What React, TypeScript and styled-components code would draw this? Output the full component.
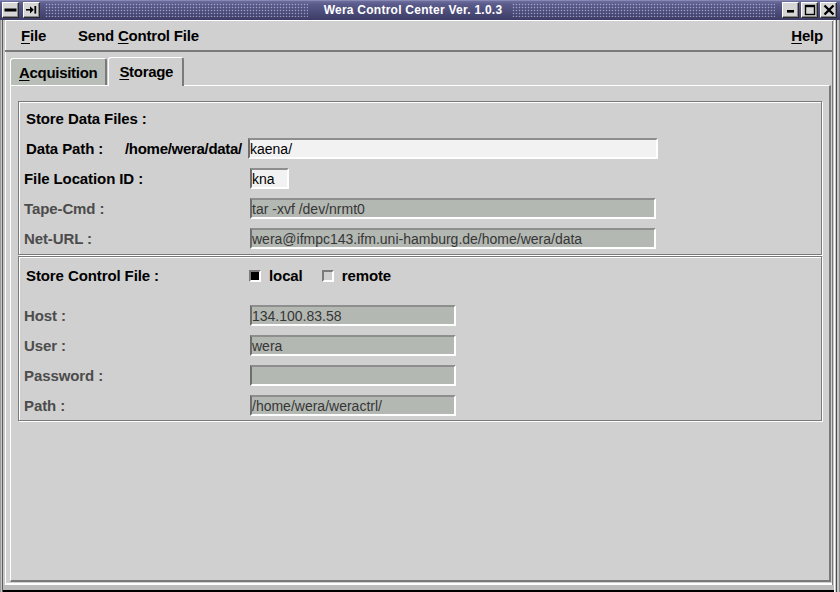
import React from "react";
import styled, { createGlobalStyle, css } from "styled-components";

const GlobalStyle = createGlobalStyle`
  html, body { margin: 0; padding: 0; background: #000; }
  body { font-family: "Liberation Sans", Arial, Helvetica, sans-serif; }
  * { box-sizing: border-box; }
`;

const FACE = "#d0d0d0";
const SHADOW = "#7a7a7a";
const UI_FONT = `bold 15px "Liberation Sans", Arial, sans-serif`;

const Window = styled.div`
  width: 840px;
  height: 592px;
  display: flex;
  flex-direction: column;
  overflow: hidden;
  background: #c6c6c6;
`;

/* ---------- title bar ---------- */
const TitleBar = styled.div`
  height: 20px;
  flex: none;
  display: flex;
  align-items: center;
  background: linear-gradient(
    to bottom,
    #a2a2ca 0px,
    #6e6e9e 1px,
    #5c5c8c 4px,
    #4c4c7a 12px,
    #3c3c66 20px
  );
`;

const ButtonGroup = styled.div<{ $side: "left" | "right" }>`
  display: flex;
  align-items: center;
  gap: ${(p) => (p.$side === "left" ? "4px" : "2px")};
  padding: ${(p) => (p.$side === "left" ? "0 0 0 2px" : "0 3px 0 0")};
`;

const WinButton = styled.div`
  width: 17px;
  height: 16px;
  background: #d6d6d6;
  border: 1px solid;
  border-color: #ffffff #2a2a2a #2a2a2a #ffffff;
  box-shadow: inset -1px -1px 0 #8a8a8a;
  display: flex;
  align-items: center;
  justify-content: center;
`;

const Dots = styled.div<{ $side: "left" | "right" }>`
  flex: 1;
  align-self: stretch;
  margin: ${(p) => (p.$side === "left" ? "3px 10px 3px 5px" : "3px 7px 3px 10px")};
  background-image: radial-gradient(circle, rgba(205, 205, 235, 0.65) 0 0.75px, transparent 1.05px);
  background-size: 3px 3px;
`;

const TitleText = styled.div`
  padding-left: 6px;
  color: #ffffff;
  font: bold 12px "Liberation Sans", Arial, sans-serif;
  letter-spacing: 0.25px;
  white-space: nowrap;
`;

/* ---------- window frame & content ---------- */
const Frame = styled.div`
  flex: 1;
  display: flex;
  padding: 0 7px 7px 5px;
  background: #c6c6c6;
  box-shadow:
    inset 1px 0 0 #9c9c9c,
    inset 2px 0 0 #c6c6c6,
    inset 3px 0 0 #5c5c5c,
    inset -1px 0 0 #8c8c8c,
    inset -3px 0 0 #c6c6c6,
    inset -4px 0 0 #4a4a4a,
    inset -5px 0 0 #c6c6c6,
    inset -6px 0 0 #ffffff,
    inset 0 -2px 0 #000000,
    inset 0 -7px 0 #bcbcbc;
`;

const Content = styled.div`
  flex: 1;
  display: flex;
  flex-direction: column;
  background: ${FACE};
  box-shadow: inset 1px 0 0 #ffffff, inset -1px 0 0 ${SHADOW}, inset 0 -2px 0 #ffffff;
`;

/* ---------- menu bar ---------- */
const MenuBar = styled.div`
  height: 32px;
  flex: none;
  display: flex;
  align-items: center;
  padding: 0 5px 0 11px;
  border-top: 1px solid #ffffff;
  border-bottom: 2px solid ${SHADOW};
  box-shadow: inset 1px 0 0 #ffffff, inset -1px 0 0 ${SHADOW};
`;

const MenuItem = styled.div<{ $right?: boolean }>`
  padding: 0 5px;
  font: ${UI_FONT};
  letter-spacing: -0.2px;
  color: #000;
  & + & {
    margin-left: 22px;
  }
  ${(p) =>
    p.$right &&
    css`
      margin-left: auto !important;
    `}
`;

const Key = styled.span`
  text-decoration: underline;
  text-underline-offset: 2px;
`;

/* ---------- tabs ---------- */
const TabArea = styled.div`
  flex: 1;
  display: flex;
  flex-direction: column;
  padding: 5px 2px 3px 5px;
`;

const TabRow = styled.div`
  height: 28px;
  flex: none;
  display: flex;
  align-items: flex-end;
  position: relative;
  z-index: 1;
`;

const Tab = styled.div<{ $active?: boolean }>`
  height: ${(p) => (p.$active ? "29px" : "27px")};
  margin-bottom: ${(p) => (p.$active ? "-1px" : "0")};
  display: flex;
  align-items: center;
  padding: ${(p) => (p.$active ? "0 9px 1px 10px" : "0 8px 0 8px")};
  background: ${(p) => (p.$active ? FACE : "#b9beb8")};
  border-top: 1px solid #ffffff;
  border-left: 1px solid #ffffff;
  border-right: 2px solid ${SHADOW};
  border-radius: 3px 3px 0 0;
  font: ${UI_FONT};
  letter-spacing: -0.3px;
  color: #000;
  & + & {
    margin-left: 1px;
  }
`;

const Panel = styled.div`
  flex: 1;
  display: flex;
  flex-direction: column;
  gap: 1px;
  padding: 15px 7px 0 7px;
  background: ${FACE};
  border-top: 1px solid #ffffff;
  border-left: 1px solid #ffffff;
  border-right: 2px solid ${SHADOW};
  border-bottom: 2px solid ${SHADOW};
`;

/* ---------- groups & rows ---------- */
const Group = styled.div<{ $pt: number; $pb: number }>`
  display: flex;
  flex-direction: column;
  gap: 9px;
  padding: ${(p) => `${p.$pt}px 0 ${p.$pb}px 5px`};
  border: 1px solid ${SHADOW};
  box-shadow: inset 1px 1px 0 #ffffff, 1px 1px 0 #ffffff;
`;

const Row = styled.div<{ $mt?: number }>`
  height: 21px;
  display: grid;
  grid-template-columns: 226px 1fr;
  align-items: center;
  margin-top: ${(p) => p.$mt ?? 0}px;
`;

const PathRow = styled(Row)`
  grid-template-columns: 101px 123px 1fr;
`;

const Label = styled.div<{ $muted?: boolean; $indent?: boolean }>`
  font: ${UI_FONT};
  letter-spacing: -0.1px;
  color: ${(p) => (p.$muted ? "#4c4c4c" : "#000")};
  padding-left: ${(p) => (p.$indent ? "2px" : "0")};
  white-space: nowrap;
`;

const Prefix = styled.div`
  font: ${UI_FONT};
  letter-spacing: -0.3px;
  color: #000;
  white-space: nowrap;
`;

const Field = styled.div<{ $w: number; $disabled?: boolean }>`
  width: ${(p) => p.$w}px;
  height: 21px;
  display: flex;
  align-items: center;
  padding: 0 1px 0 0;
  background: ${(p) => (p.$disabled ? "#b4b8b3" : "#f2f2f2")};
  border: 2px solid;
  border-color: #8e8e8e #ffffff #ffffff #6e6e6e;
  font: 14px "Liberation Sans", Arial, sans-serif;
  color: ${(p) => (p.$disabled ? "#363636" : "#000")};
  white-space: nowrap;
  overflow: hidden;
`;

const Toggles = styled.div`
  display: flex;
  align-items: center;
  margin-left: -1px;
`;

const Toggle = styled.div`
  display: flex;
  align-items: center;
  gap: 8px;
  font: ${UI_FONT};
  letter-spacing: -0.1px;
  color: #000;
  & + & {
    margin-left: 19px;
  }
`;

const ToggleBox = styled.span<{ $on?: boolean }>`
  width: 12px;
  height: 12px;
  border: 2px solid;
  border-color: #7a7a7a #ffffff #ffffff #7a7a7a;
  background: ${(p) => (p.$on ? "#000" : "#cfcfcf")};
`;

/* ---------- title bar glyphs ---------- */
const IconBar = () => (
  <svg width="13" height="12" viewBox="0 0 13 12">
    <rect x="0.5" y="4.5" width="12" height="3" fill="#000" />
  </svg>
);

const IconPin = () => (
  <svg width="11" height="10" viewBox="0 0 11 10">
    <rect x="0" y="4" width="5" height="1.6" fill="#000" />
    <polygon points="4,1.2 7.8,4.8 4,8.4" fill="#000" />
    <rect x="8.4" y="1" width="1.8" height="7.6" fill="#000" />
  </svg>
);

const IconMin = () => (
  <svg width="11" height="11" viewBox="0 0 11 11">
    <rect x="2" y="5" width="7" height="2.6" fill="#000" />
  </svg>
);

const IconMax = () => (
  <svg width="12" height="12" viewBox="0 0 12 12">
    <rect x="1.5" y="1.5" width="9" height="9" fill="none" stroke="#000" strokeWidth="1.4" />
    <rect x="1" y="1" width="10" height="2.2" fill="#000" />
  </svg>
);

const IconClose = () => (
  <svg width="12" height="12" viewBox="0 0 12 12">
    <path d="M1.5 1.5 L10.5 10.5 M10.5 1.5 L1.5 10.5" stroke="#000" strokeWidth="2.4" />
  </svg>
);

export default function App() {
  return (
    <>
      <GlobalStyle />
      <Window>
        <TitleBar>
          <ButtonGroup $side="left">
            <WinButton>
              <IconBar />
            </WinButton>
            <WinButton>
              <IconPin />
            </WinButton>
          </ButtonGroup>
          <Dots $side="left" />
          <TitleText>Wera Control Center Ver. 1.0.3</TitleText>
          <Dots $side="right" />
          <ButtonGroup $side="right">
            <WinButton>
              <IconMin />
            </WinButton>
            <WinButton>
              <IconMax />
            </WinButton>
            <WinButton>
              <IconClose />
            </WinButton>
          </ButtonGroup>
        </TitleBar>

        <Frame>
          <Content>
            <MenuBar>
              <MenuItem>
                <Key>F</Key>ile
              </MenuItem>
              <MenuItem>
                Send <Key>C</Key>ontrol File
              </MenuItem>
              <MenuItem $right>
                <Key>H</Key>elp
              </MenuItem>
            </MenuBar>

            <TabArea>
              <TabRow>
                <Tab>
                  <Key>A</Key>cquisition
                </Tab>
                <Tab $active>
                  <Key>S</Key>torage
                </Tab>
              </TabRow>

              <Panel>
                <Group $pt={6} $pb={5}>
                  <Row>
                    <Label $indent>Store Data Files :</Label>
                  </Row>
                  <PathRow>
                    <Label $indent>Data Path :</Label>
                    <Prefix>/home/wera/data/</Prefix>
                    <Field $w={410}>kaena/</Field>
                  </PathRow>
                  <Row>
                    <Label>File Location ID :</Label>
                    <Field $w={39}>kna</Field>
                  </Row>
                  <Row>
                    <Label $muted>Tape-Cmd :</Label>
                    <Field $w={406} $disabled>
                      tar -xvf /dev/nrmt0
                    </Field>
                  </Row>
                  <Row>
                    <Label $muted>Net-URL :</Label>
                    <Field $w={406} $disabled>
                      wera@ifmpc143.ifm.uni-hamburg.de/home/wera/data
                    </Field>
                  </Row>
                </Group>

                <Group $pt={8} $pb={4}>
                  <Row>
                    <Label $indent>Store Control File :</Label>
                    <Toggles>
                      <Toggle>
                        <ToggleBox $on />
                        local
                      </Toggle>
                      <Toggle>
                        <ToggleBox />
                        remote
                      </Toggle>
                    </Toggles>
                  </Row>
                  <Row $mt={10}>
                    <Label $muted>Host :</Label>
                    <Field $w={206} $disabled>
                      134.100.83.58
                    </Field>
                  </Row>
                  <Row>
                    <Label $muted>User :</Label>
                    <Field $w={206} $disabled>
                      wera
                    </Field>
                  </Row>
                  <Row>
                    <Label $muted>Password :</Label>
                    <Field $w={206} $disabled />
                  </Row>
                  <Row>
                    <Label $muted>Path :</Label>
                    <Field $w={206} $disabled>
                      /home/wera/weractrl/
                    </Field>
                  </Row>
                </Group>
              </Panel>
            </TabArea>
          </Content>
        </Frame>
      </Window>
    </>
  );
}
